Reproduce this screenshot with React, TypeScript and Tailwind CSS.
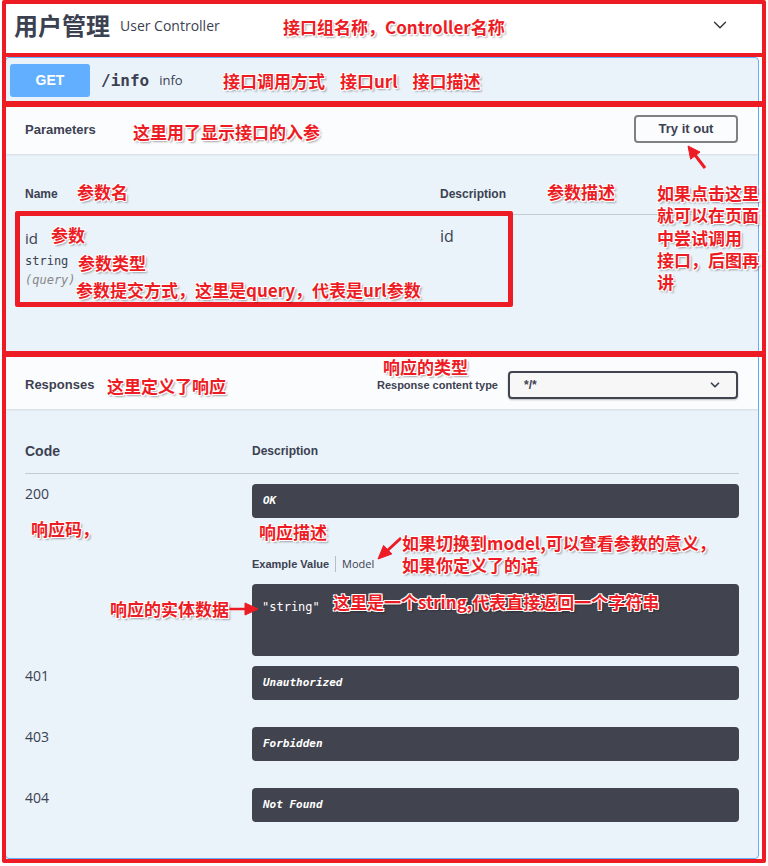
import { ChevronDown } from "lucide-react";

const note =
  "absolute whitespace-nowrap text-[17px] leading-[22px] font-bold text-[#ed1c24] font-['Noto_Sans_CJK_SC',sans-serif] [text-shadow:-1px_-1px_0_#fff,1px_-1px_0_#fff,-1px_1px_0_#fff,1px_1px_0_#fff,2px_2px_2px_rgba(0,0,0,0.35)]";
const redBox = "absolute border-[4px] border-[#ed1c24] rounded-[2px] pointer-events-none";
const head = "font-['Liberation_Sans',sans-serif] font-bold";
const mono = "font-['DejaVu_Sans_Mono',monospace]";

const responses = [
  { code: "401", text: "Unauthorized" },
  { code: "403", text: "Forbidden" },
  { code: "404", text: "Not Found" },
];

function DarkBox({ text }: { text: string }) {
  return (
    <div className="h-[34px] rounded-[4px] bg-[#41444e] flex items-center px-[11px]">
      <span className={`${mono} text-[11px] italic font-bold text-white`}>{text}</span>
    </div>
  );
}

export default function App() {
  return (
    <div className="relative w-[768px] h-[866px] overflow-hidden bg-white text-[#3b4151] font-['Open_Sans','Noto_Sans_CJK_SC',sans-serif]">
      {/* tag header */}
      <div className="h-[57px] flex items-center pl-[14px] pr-[37px] pb-[7px]">
        <h3 className="text-[24px] font-bold leading-none font-['Noto_Sans_CJK_SC',sans-serif]">用户管理</h3>
        <span className="ml-[10px] text-[14px]">User Controller</span>
        <ChevronDown className="ml-auto text-[#333]" size={22} strokeWidth={1.5} />
      </div>

      {/* operation block */}
      <div className="ml-[5px] mr-[9px] border border-[#61affe] rounded-[4px] bg-[#eaf2fa]">
        <div className="h-[45px] flex items-center px-[4px]">
          <span className={`${head} w-[80px] h-[33px] rounded-[3px] bg-[#61affe] text-white text-[14px] flex items-center justify-center`}>
            GET
          </span>
          <span className={`${mono} ml-[11px] text-[16px] font-semibold`}>/info</span>
          <span className="ml-[10px] text-[13px]">info</span>
        </div>

        {/* parameters */}
        <div className="h-[51px] flex items-center justify-between pl-[19px] pr-[20px] bg-[#fbfcfe] shadow-[0_1px_2px_rgba(0,0,0,0.1)]">
          <span className={`${head} text-[13px] mt-[2px]`}>Parameters</span>
          <button className={`${head} w-[104px] h-[28px] border-2 border-[#808080] rounded-[4px] text-[13px]`}>Try it out</button>
        </div>
        <div className="h-[203px] pt-[30px] px-[19px]">
          <div className="flex h-[31px] border-b border-[#c5cbd6]">
            <span className={`${head} w-[415px] text-[12px] leading-[20px]`}>Name</span>
            <span className={`${head} text-[12px] leading-[20px]`}>Description</span>
          </div>
          <div className="flex pt-[13px]">
            <div className="w-[415px] flex flex-col">
              <span className="text-[15px] leading-[20px]">id</span>
              <span className={`${mono} mt-[5px] text-[12px] leading-[16px]`}>string</span>
              <span className={`${mono} mt-[3px] text-[12px] leading-[16px] italic text-[#888]`}>(query)</span>
            </div>
            <span className="text-[16px] leading-[20px] -mt-[2px]">id</span>
          </div>
        </div>

        {/* responses */}
        <div className="h-[52px] flex items-center pt-[4px] pl-[19px] pr-[20px] bg-[#fbfcfe] shadow-[0_1px_2px_rgba(0,0,0,0.1)]">
          <span className={`${head} text-[13px]`}>Responses</span>
          <span className={`${head} ml-auto text-[11px]`}>Response content type</span>
          <div className="ml-[10px] w-[230px] h-[28px] border-2 border-[#41444e] rounded-[4px] bg-[#f7f7f7] shadow-[0_1px_2px_rgba(0,0,0,0.25)] flex items-center pl-[14px] pr-[14px]">
            <span className={`${head} text-[12px]`}>*/*</span>
            <ChevronDown className="ml-auto" size={14} strokeWidth={3} />
          </div>
        </div>
        <div className="pt-[32px] px-[19px] pb-[36px]">
          <div className="flex h-[33px] border-b border-[#c5cbd6]">
            <span className={`${head} w-[227px] text-[14px] leading-[20px]`}>Code</span>
            <span className={`${head} text-[12px] leading-[20px]`}>Description</span>
          </div>
          <div className="flex pt-[10px]">
            <span className="w-[227px] text-[14px] leading-[20px]">200</span>
            <div className="flex-1">
              <DarkBox text="OK" />
              <div className="mt-[38px] h-[16px] flex items-center">
                <span className={`${head} text-[11px]`}>Example Value</span>
                <span className="mx-[6px] w-px h-[16px] bg-[#b8bcc4]" />
                <span className="text-[11px]">Model</span>
              </div>
              <div className="mt-[12px] h-[72px] rounded-[4px] bg-[#41444e] px-[10px] pt-[9px]">
                <span className={`${mono} text-[12px] text-white`}>"string"</span>
              </div>
            </div>
          </div>
          {responses.map((r, i) => (
            <div key={r.code} className={`flex ${i === 0 ? "mt-[10px]" : "mt-[27px]"}`}>
              <span className="w-[227px] text-[14px] leading-[20px]">{r.code}</span>
              <div className="flex-1">
                <DarkBox text={r.text} />
              </div>
            </div>
          ))}
        </div>
      </div>

      {/* annotation boxes */}
      <div className={`${redBox} left-[2px] top-[0px] w-[764px] h-[57px]`} />
      <div className={`${redBox} left-[2px] top-[53px] w-[764px] h-[54px]`} />
      <div className={`${redBox} left-[2px] top-[101px] w-[764px] h-[256px]`} />
      <div className={`${redBox} left-[2px] top-[351px] w-[764px] h-[512px]`} />
      <div className={`${redBox} left-[15px] top-[211px] w-[498px] h-[96px] border-[5px]`} />

      {/* annotation arrows */}
      <svg className="absolute inset-0 pointer-events-none" width="768" height="866" viewBox="0 0 768 866">
        <g fill="#ed1c24" stroke="#ed1c24">
          <line x1="705" y1="168" x2="695" y2="155" strokeWidth="3" />
          <polygon points="688,146 700,152 690.6,159.2" strokeWidth="1" />
          <line x1="401" y1="538" x2="388" y2="550" strokeWidth="3" />
          <polygon points="378,559 391.8,554 383.6,545.4" strokeWidth="1" />
          <line x1="228" y1="609" x2="246" y2="609" strokeWidth="2.5" />
          <polygon points="258,609 245,603 245,615" strokeWidth="1" />
        </g>
      </svg>

      {/* annotation texts */}
      <span className={`${note} left-[283px] top-[16px]`}>接口组名称，Controller名称</span>
      <span className={`${note} left-[223px] top-[70px] flex gap-[15px]`}>
        <span>接口调用方式</span>
        <span>接口url</span>
        <span>接口描述</span>
      </span>
      <span className={`${note} left-[133px] top-[121px]`}>这里用了显示接口的入参</span>
      <span className={`${note} left-[77px] top-[181px]`}>参数名</span>
      <span className={`${note} left-[547px] top-[181px]`}>参数描述</span>
      <span className={`${note} left-[657px] top-[182px] flex flex-col`}>
        <span className="h-[22.3px]">如果点击这里</span>
        <span className="h-[22.3px]">就可以在页面</span>
        <span className="h-[22.3px]">中尝试调用</span>
        <span className="h-[22.3px]">接口，后图再</span>
        <span className="h-[22.3px]">讲</span>
      </span>
      <span className={`${note} left-[51px] top-[224px]`}>参数</span>
      <span className={`${note} left-[78px] top-[252px]`}>参数类型</span>
      <span className={`${note} left-[76px] top-[279px]`}>参数提交方式，这里是query，代表是url参数</span>
      <span className={`${note} left-[383px] top-[356px]`}>响应的类型</span>
      <span className={`${note} left-[107px] top-[375px]`}>这里定义了响应</span>
      <span className={`${note} left-[31px] top-[518px]`}>响应码，</span>
      <span className={`${note} left-[259px] top-[521px]`}>响应描述</span>
      <span className={`${note} left-[402px] top-[532px] flex flex-col`}>
        <span className="h-[22px]">如果切换到model,可以查看参数的意义，</span>
        <span className="h-[22px]">如果你定义了的话</span>
      </span>
      <span className={`${note} left-[110px] top-[598px]`}>响应的实体数据</span>
      <span className={`${note} left-[333px] top-[591px]`}>这里是一个string,代表直接返回一个字符串</span>
    </div>
  );
}
